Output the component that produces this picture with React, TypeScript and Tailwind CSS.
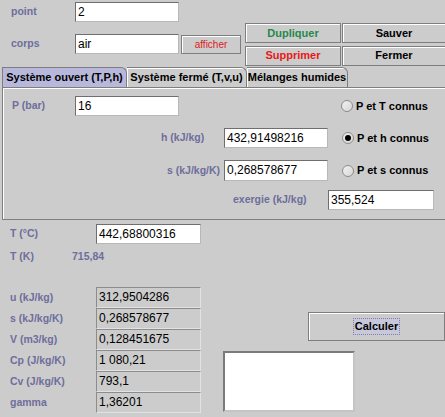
import React from 'react'

const font = { fontFamily: '"Liberation Sans", Arial, sans-serif' }

function Field({ value, className = '' }: { value: string; className?: string }) {
  return (
    <div
      className={`h-[20px] border border-t-[#6e6e6e] border-l-[#6e6e6e] border-b-[#b8b8b8] border-r-[#b8b8b8] bg-white pl-[2px] text-[12px] leading-[18px] text-black ${className}`}
    >
      {value}
    </div>
  )
}

function ReadOnly({ value }: { value: string }) {
  return (
    <div className="h-[21px] w-[105px] border border-[#8c8c8c] border-b-[#e2e2e2] border-r-[#e2e2e2] pl-[2px] text-[12px] leading-[19px] text-black">
      {value}
    </div>
  )
}

function Btn({ children, className = '' }: { children: React.ReactNode; className?: string }) {
  return (
    <div
      className={`flex items-center justify-center whitespace-nowrap border border-[#7e7e7e] bg-[#cccccc] shadow-[inset_1px_1px_0_#ffffff] text-[11px] font-bold ${className}`}
    >
      {children}
    </div>
  )
}

function Radio({ label, checked }: { label: string; checked?: boolean }) {
  return (
    <div className="flex items-center gap-[3px] whitespace-nowrap text-[11px] font-bold text-black">
      <span className="flex h-[12px] w-[12px] items-center justify-center rounded-full border border-[#8c8c8c] bg-gradient-to-br from-[#f2f2f2] to-[#d6d6d6]">
        {checked && <span className="h-[6px] w-[6px] rounded-full bg-black" />}
      </span>
      {label}
    </div>
  )
}

const label = 'whitespace-nowrap text-[10.5px] font-bold text-[#6e6e9c]'

export default function App() {
  const results = [
    ['u (kJ/kg)', '312,9504286'],
    ['s (kJ/kg/K)', '0,268578677'],
    ['V (m3/kg)', '0,128451675'],
    ['Cp (J/kg/K)', '1 080,21'],
    ['Cv (J/kg/K)', '793,1'],
    ['gamma', '1,36201'],
  ]

  return (
    <div className="h-[417px] w-[445px] overflow-hidden bg-[#cccccc]" style={font}>
      {/* top */}
      <div className="flex h-[67px]">
        <div className="w-[241px]">
          <div className="mt-[2px] flex h-[20px] items-center">
            <span className={`${label} w-[75px] pl-[11px]`}>point</span>
            <Field value="2" className="w-[104px]" />
          </div>
          <div className="mt-[12px] flex h-[20px] items-center">
            <span className={`${label} w-[75px] pl-[11px]`}>corps</span>
            <Field value="air" className="w-[104px]" />
            <Btn className="ml-[2px] h-[19px] w-[60px] !font-normal !text-[10px] text-[#e02020]">afficher</Btn>
          </div>
        </div>
        <div className="ml-[4px] mt-[23px] grid grid-cols-[96px_104px] gap-x-[1px] gap-y-[1px]">
          <Btn className="h-[20px] text-[#1f8a4a]">Dupliquer</Btn>
          <Btn className="h-[20px] text-black">Sauver</Btn>
          <Btn className="h-[20px] text-[#e81818]">Supprimer</Btn>
          <Btn className="h-[20px] text-black">Fermer</Btn>
        </div>
      </div>

      {/* tabs */}
      <div className="flex h-[20px] items-end whitespace-nowrap pl-[2px] text-[11px] font-bold">
        <div className="flex h-[20px] w-[125px] items-center justify-center rounded-tr-[6px] border border-b-0 border-[#7e7e7e] bg-[#b8b8dc]">
          Système ouvert (T,P,h)
        </div>
        <div className="flex h-[20px] w-[120px] items-center justify-center rounded-tr-[6px] border border-b-0 border-l-0 border-[#7e7e7e] bg-[#cccccc] shadow-[inset_1px_1px_0_#ffffff]">
          Système fermé (T,v,u)
        </div>
        <div className="flex h-[20px] w-[101px] items-center justify-center rounded-tr-[6px] border border-b-0 border-l-0 border-[#7e7e7e] bg-[#cccccc] shadow-[inset_1px_1px_0_#ffffff]">
          Mélanges humides
        </div>
      </div>

      {/* panel */}
      <div className="ml-[2px] h-[133px] border-l border-t border-b border-[#7e7e7e] shadow-[inset_1px_1px_0_#ffffff]">
        <div className="mt-[8px] flex h-[20px] items-center">
          <span className={`${label} w-[72px] pl-[9px]`}>P (bar)</span>
          <Field value="16" className="w-[104px]" />
          <div className="ml-[162px]">
            <Radio label="P et T connus" />
          </div>
        </div>
        <div className="mt-[12px] flex h-[20px] items-center">
          <span className={`${label} w-[221px] pl-[158px]`}>h (kJ/kg)</span>
          <Field value="432,91498216" className="w-[104px]" />
          <div className="ml-[14px]">
            <Radio label="P et h connus" checked />
          </div>
        </div>
        <div className="mt-[12px] flex h-[21px] items-center">
          <span className={`${label} w-[221px] pl-[164px]`}>s (kJ/kg/K)</span>
          <Field value="0,268578677" className="!h-[21px] w-[104px]" />
          <div className="ml-[14px]">
            <Radio label="P et s connus" />
          </div>
        </div>
        <div className="mt-[9px] flex h-[20px] items-center">
          <span className={`${label} w-[325px] pl-[230px]`}>exergie (kJ/kg)</span>
          <Field value="355,524" className="w-[106px]" />
        </div>
      </div>

      {/* lower */}
      <div className="flex">
        <div className="w-[201px]">
          <div className="mt-[4px] flex h-[20px] items-center">
            <span className={`${label} w-[96px] pl-[10px]`}>T (°C)</span>
            <Field value="442,68800316" className="w-[105px]" />
          </div>
          <div className="mt-[3px] flex h-[20px] items-center">
            <span className={`${label} w-[72px] pl-[10px]`}>T (K)</span>
            <span className={label}>715,84</span>
          </div>
          <div className="mt-[20px]">
            {results.map(([k, v]) => (
              <div key={k} className="flex h-[21px] items-center">
                <span className={`${label} w-[96px] pl-[10px]`}>{k}</span>
                <ReadOnly value={v} />
              </div>
            ))}
          </div>
        </div>
        <div className="flex-1">
          <Btn className="ml-[107px] mt-[92px] h-[29px] w-[137px] text-black">
            <span className="border border-dotted border-[#8080a0] bg-[#c8c8dc] px-[1px] leading-[15px]">Calculer</span>
          </Btn>
          <div className="ml-[22px] mt-[10px] h-[61px] w-[132px] border-2 border-[#7a7a7a] border-b-[#c4c4c4] border-r-[#c4c4c4] bg-white" />
        </div>
      </div>
    </div>
  )
}
